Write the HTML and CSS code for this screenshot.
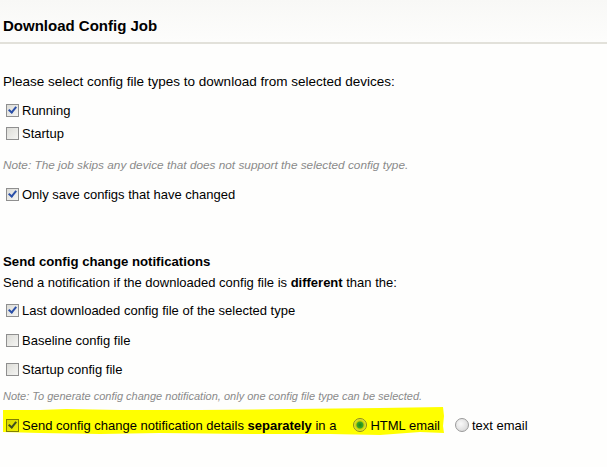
FILE: index.html
```html
<!DOCTYPE html>
<html>
<head>
<meta charset="utf-8">
<link rel="stylesheet" href="styles.css">
</head>
<body>
<div class="page">
  <div class="header"><h1 class="title">Download Config Job</h1></div>
  <div class="content">
    <p class="intro">Please select config file types to download from selected devices:</p>
    <div class="opt r1"><span class="cb checked"></span><span>Running</span></div>
    <div class="opt r2"><span class="cb"></span><span>Startup</span></div>
    <p class="note n1">Note: The job skips any device that does not support the selected config type.</p>
    <div class="opt r3"><span class="cb checked"></span><span>Only save configs that have changed</span></div>

    <h2 class="subhead">Send config change notifications</h2>
    <p class="intro2">Send a notification if the downloaded config file is <b>different</b> than the:</p>
    <div class="opt r4"><span class="cb checked"></span><span>Last downloaded config file of the selected type</span></div>
    <div class="opt r5"><span class="cb"></span><span>Baseline config file</span></div>
    <div class="opt r6"><span class="cb"></span><span>Startup config file</span></div>
    <p class="note n2">Note: To generate config change notification, only one config file type can be selected.</p>
    <div class="opt r7 hl-row">
      <svg class="hl" width="450" height="30" viewBox="0 0 450 30"><polygon points="3,4 40,4 66,3 120,4 200,4 290,3 380,2 443,1 444,10 443,20 444,27 420,26 380,29 330,28 250,28 160,27 100,28 40,27 3,26" fill="#ffff00"/></svg>
      <span class="cb checked hlcb"></span><span class="lbl">Send config change notification details <b>separately</b> in a</span>
      <span class="radio on"></span><span class="rlbl">HTML email</span>
      <span class="radio"></span><span class="rlbl">text email</span>
    </div>
  </div>
</div>
</body>
</html>
```
FILE: styles.css
```css
html, body { margin: 0; padding: 0; }
body {
  width: 607px; height: 467px; overflow: hidden;
  background: #fefefd;
  font-family: "Liberation Sans", Arial, sans-serif;
  font-size: 13px; color: #000;
}
.header {
  height: 42px;
  background: linear-gradient(#f8f8f6, #fdfdfc);
  border-bottom: 2px solid #e2e1da;
  display: flex; align-items: flex-end;
}
.title {
  margin: 0 0 7px 3px;
  font-size: 15px; font-weight: bold; line-height: 18px;
}
.content { padding-left: 3px; }
p, h2 { margin: 0; }
.intro { margin-top: 30px; line-height: 16px; font-size: 13.5px; }
.opt { display: flex; align-items: center; height: 16px; }
.r1 { margin-top: 12px; }
.r2 { margin-top: 7px; }
.n1 { margin-top: 17px; font-size: 11.8px; }
.r3 { margin-top: 14px; }
.subhead { margin-top: 52px; font-size: 13.2px; line-height: 16px; }
.intro2 { margin-top: 5px; line-height: 16px; }
.r4 { margin-top: 11px; }
.r5 { margin-top: 14px; }
.r6 { margin-top: 13px; }
.n2 { margin-top: 12px; font-size: 11px; }
.r7 { margin-top: 14px; }
.note {
  font-style: italic; color: #8a8a8a; line-height: 14px;
}
.cb {
  width: 11px; height: 11px; margin: 0 3px 0 3px;
  border: 1px solid #8f8f8f;
  background: linear-gradient(135deg, #dcdcd7, #f5f5f3);
  position: relative; flex: none;
}
.cb.checked::after {
  content: ""; position: absolute; left: 3px; top: 0px;
  width: 3px; height: 6px;
  border: solid #2a4fa8; border-width: 0 2px 2px 0;
  transform: rotate(40deg);
}
.hl-row { position: relative; }
.hl { position: absolute; left: -3px; top: -11px; z-index: -1; }
.cb.hlcb {
  border-color: #808000;
  background: linear-gradient(135deg, #d6d600, #f0f000);
}
.cb.hlcb::after { border-color: #3e4e20; }
.lbl { margin-right: 17px; }
.radio {
  width: 12px; height: 12px; border-radius: 50%;
  border: 1px solid #9a9a9a;
  background: radial-gradient(circle at 40% 40%, #fafafa, #d0d0d0);
  margin-right: 3px; flex: none; position: relative;
}
.radio.on {
  border-color: #8a8a20;
  background: radial-gradient(circle, #1e8a0c 0, #3aa52a 3px, #c8d000 4px, #e8ec40 6px);
}
.rlbl { margin-right: 15px; }
```
